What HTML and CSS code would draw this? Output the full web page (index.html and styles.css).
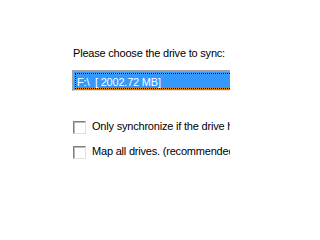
FILE: index.html
```html
<!DOCTYPE html>
<html>
<head>
<meta charset="utf-8">
<link rel="stylesheet" href="styles.css">
</head>
<body>
<div class="panel">
  <p class="prompt">Please choose the drive to sync:</p>
  <div class="select"><span class="focus">F:\&nbsp; [ 2002.72 MB]</span></div>
  <div class="options">
    <label class="option"><span class="box"></span><span class="text">Only synchronize if the drive has been changed</span></label>
    <label class="option"><span class="box"></span><span class="text">Map all drives. (recommended)</span></label>
  </div>
</div>
</body>
</html>
```
FILE: styles.css
```css
html, body {
  margin: 0;
  background: #fff;
}
body {
  font-family: "Liberation Sans", Arial, sans-serif;
  font-size: 11px;
  color: #000;
}
.panel {
  width: 230px;
  height: 206px;
  overflow: hidden;
  box-sizing: border-box;
  padding: 47px 0 0 72px;
  display: flex;
  flex-direction: column;
}
.prompt {
  margin: 0 0 0 1px;
  line-height: 13px;
  letter-spacing: -0.2px;
  white-space: nowrap;
}
.select {
  margin-top: 10px;
  width: 200px;
  height: 21px;
  box-sizing: border-box;
  border-top: 2px solid #a0a0a0;
  border-left: 2px solid #a0a0a0;
  border-bottom: 1px solid #e2e2e2;
  background: #3399ff;
  padding: 1px 0 0 1px;
  flex-shrink: 0;
}
.focus {
  display: block;
  height: 16px;
  box-sizing: border-box;
  border: 1px dotted #000;
  background: linear-gradient(#3399ff, #3399ff) padding-box, linear-gradient(#ff8a00, #ff8a00) border-box;
  color: #fff;
  padding: 2px 0 0 1px;
  line-height: 12px;
  letter-spacing: -0.2px;
  white-space: nowrap;
}
.options {
  margin-top: 30px;
  display: flex;
  flex-direction: column;
  gap: 12px;
}
.option {
  display: flex;
  align-items: flex-start;
  gap: 6px;
  white-space: nowrap;
}
.box {
  flex: 0 0 auto;
  margin-left: 1px;
  width: 13px;
  height: 13px;
  box-sizing: border-box;
  background: #fff;
  border-top: 1px solid #808080;
  border-left: 1px solid #808080;
  border-right: 1px solid #e0e0e0;
  border-bottom: 1px solid #e0e0e0;
  box-shadow: inset 1px 1px 0 #b8b8b8;
}
.text {
  line-height: 11px;
  letter-spacing: -0.2px;
}
```
